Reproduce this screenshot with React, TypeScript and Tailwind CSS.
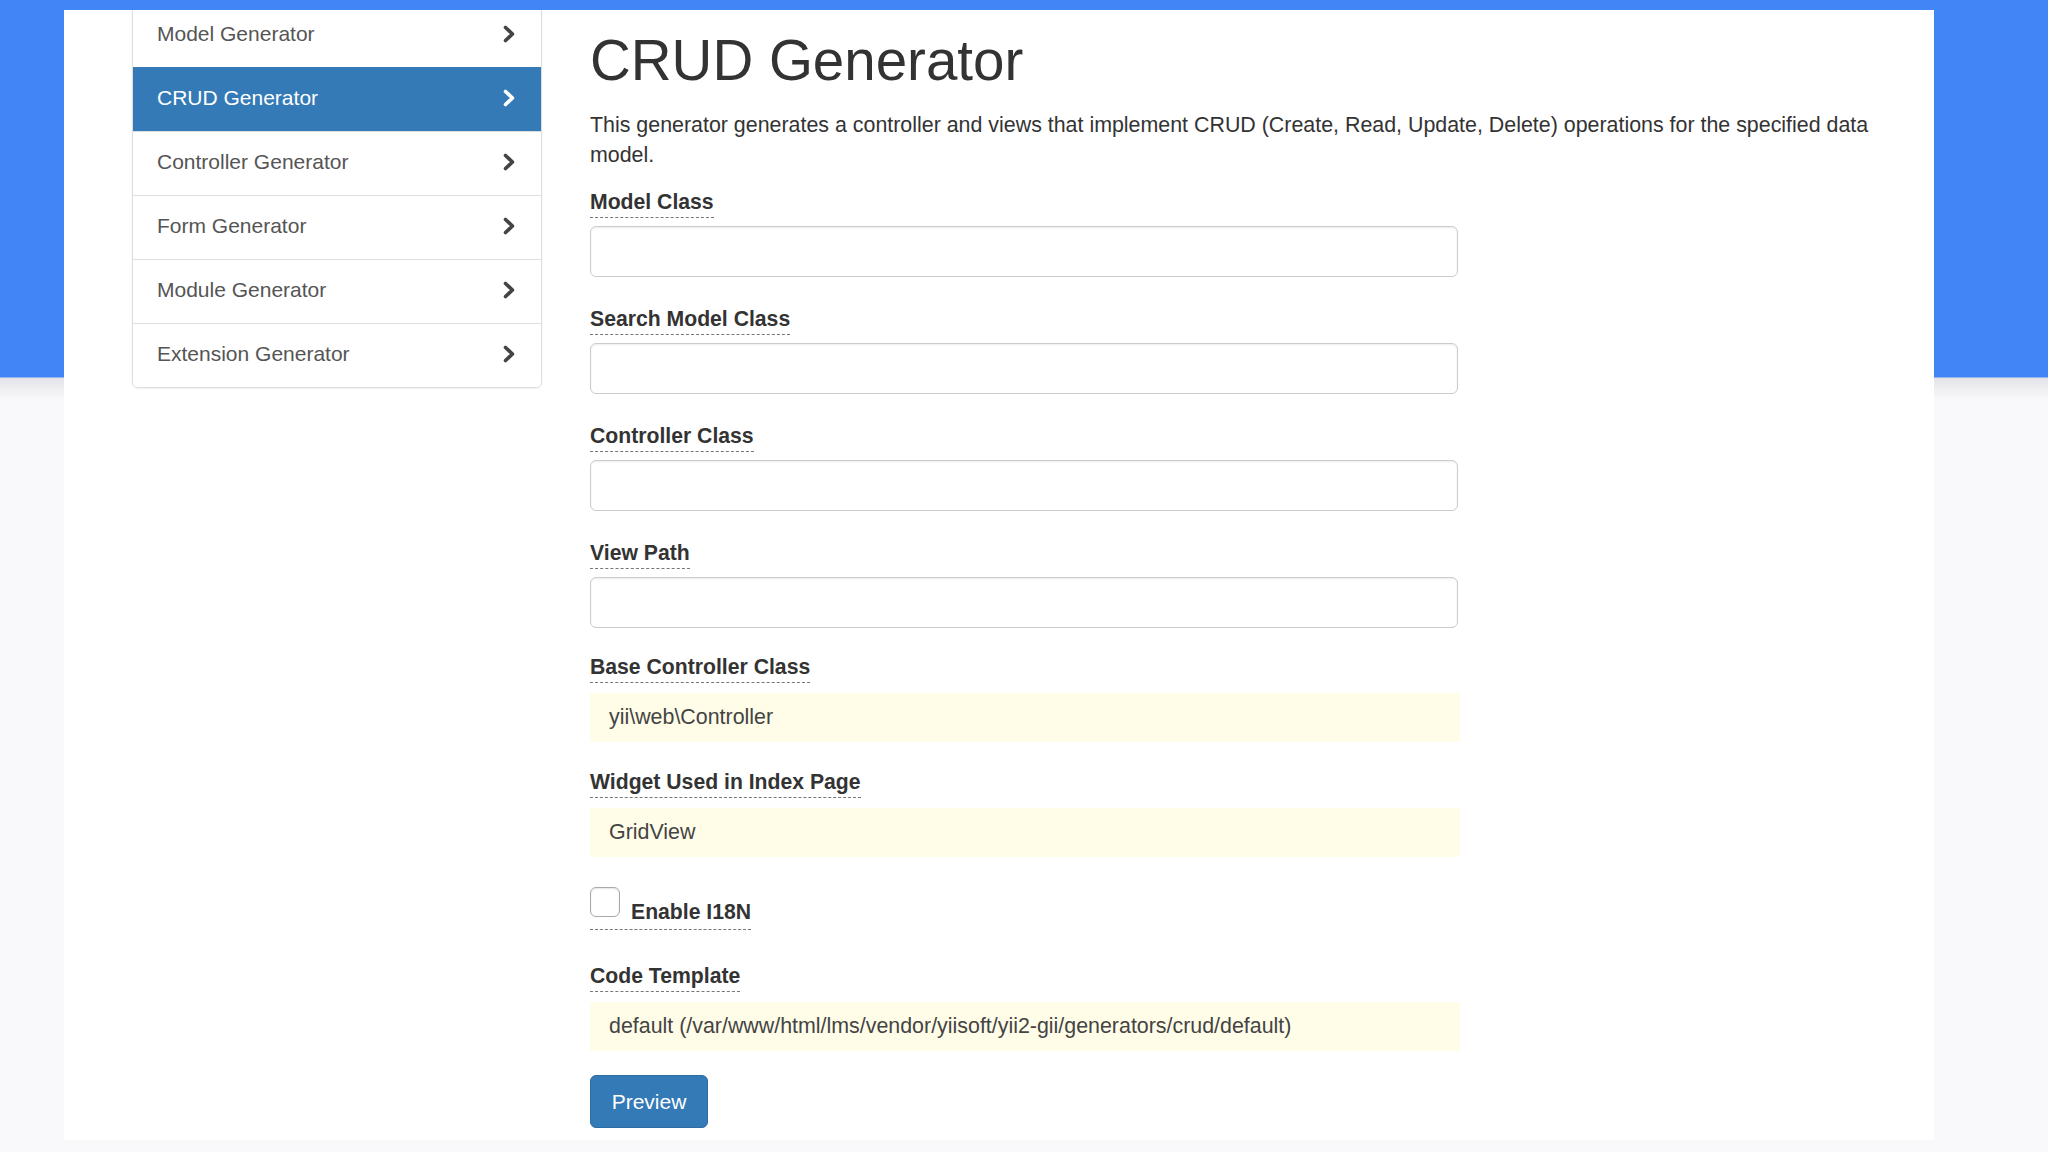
const generators = [
  "Model Generator",
  "CRUD Generator",
  "Controller Generator",
  "Form Generator",
  "Module Generator",
  "Extension Generator",
];

function Chevron({ active }: { active: boolean }) {
  return (
    <svg width="14" height="18" viewBox="0 0 14 18" className="shrink-0">
      <polyline
        points="3.5,2.5 10.5,9 3.5,15.5"
        fill="none"
        stroke={active ? "#ffffff" : "#444444"}
        strokeWidth="3.6"
        strokeLinecap="round"
        strokeLinejoin="round"
      />
    </svg>
  );
}

function FieldLabel({ text }: { text: string }) {
  return (
    <div>
      <span className="inline-block font-bold text-[#333] text-[21.2px] leading-[30px] border-b border-dashed border-[#777]">
        {text}
      </span>
    </div>
  );
}

function TextField({ label, mb }: { label: string; mb: string }) {
  return (
    <div className={mb}>
      <FieldLabel text={label} />
      <div className="mt-[8px] h-[51px] w-[868px] bg-white border border-[#cccccc] rounded-[6px] shadow-[inset_0_1px_2px_rgba(0,0,0,0.08)]" />
    </div>
  );
}

function StickyField({ label, value, mb }: { label: string; value: string; mb: string }) {
  return (
    <div className={mb}>
      <FieldLabel text={label} />
      <div className="mt-[10px] h-[49px] w-[870px] bg-[#fffde8] flex items-center pl-[19px] text-[21.4px] text-[#444]">
        {value}
      </div>
    </div>
  );
}

export default function App() {
  return (
    <div className="w-[2048px] h-[1152px] overflow-hidden bg-[linear-gradient(to_bottom,#4285f4_0px,#4285f4_377px,#e4e4e8_378px,#f9f9fb_400px)] font-['Liberation_Sans',Arial,sans-serif] pt-[10px]">
      <div className="ml-[64px] w-[1870px] h-[1130px] bg-white overflow-hidden flex pl-[68px]">
        {/* sidebar */}
        <div className="w-[410px] shrink-0">
          <div className="-mt-[7px] border border-[#dddddd] rounded-[6px] shadow-[0_1px_2px_rgba(0,0,0,0.06)] overflow-hidden">
            {generators.map((g, i) => {
              const active = g === "CRUD Generator";
              return (
                <div
                  key={g}
                  className={
                    (i > 0 ? "border-t " : "") +
                    (active
                      ? "bg-[#337ab7] border-[#337ab7] text-white "
                      : "bg-white border-[#dddddd] text-[#555] ") +
                    "h-[60px] box-content flex items-center justify-between pl-[24px] pr-[25px] pb-[3px] text-[21px]"
                  }
                >
                  <span>{g}</span>
                  <Chevron active={active} />
                </div>
              );
            })}
          </div>
        </div>

        {/* main */}
        <div className="flex-1 pl-[48px] pr-[44px] pt-[20px]">
          <h1 className="text-[56.5px] leading-[62px] text-[#333] font-normal">CRUD Generator</h1>
          <p className="mt-[18px] text-[21.4px] leading-[30px] text-[#333]">
            This generator generates a controller and views that implement CRUD (Create, Read, Update, Delete) operations for the specified data model.
          </p>

          <div className="mt-[17px]">
            <TextField label="Model Class" mb="mb-[27px]" />
            <TextField label="Search Model Class" mb="mb-[27px]" />
            <TextField label="Controller Class" mb="mb-[27px]" />
            <TextField label="View Path" mb="mb-[24px]" />
            <StickyField label="Base Controller Class" value="yii\web\Controller" mb="mb-[25px]" />
            <StickyField label="Widget Used in Index Page" value="GridView" mb="mb-[30px]" />

            <div className="mb-[31px]">
              <label className="inline-flex items-start gap-[11px] border-b border-dashed border-[#777] pb-[2px]">
                <span className="w-[30px] h-[30px] rounded-[6px] border-[1.5px] border-[#a9a9a9] bg-white shadow-[inset_0_1px_2px_rgba(0,0,0,0.1)]" />
                <span className="mt-[10px] font-bold text-[#333] text-[21.2px] leading-[30px]">Enable I18N</span>
              </label>
            </div>

            <StickyField
              label="Code Template"
              value="default (/var/www/html/lms/vendor/yiisoft/yii2-gii/generators/crud/default)"
              mb="mb-[24px]"
            />

            <button className="w-[118px] h-[53px] bg-[#337ab7] border border-[#2e6da4] rounded-[6px] text-white text-[21px]">
              Preview
            </button>
          </div>
        </div>
      </div>
    </div>
  );
}
